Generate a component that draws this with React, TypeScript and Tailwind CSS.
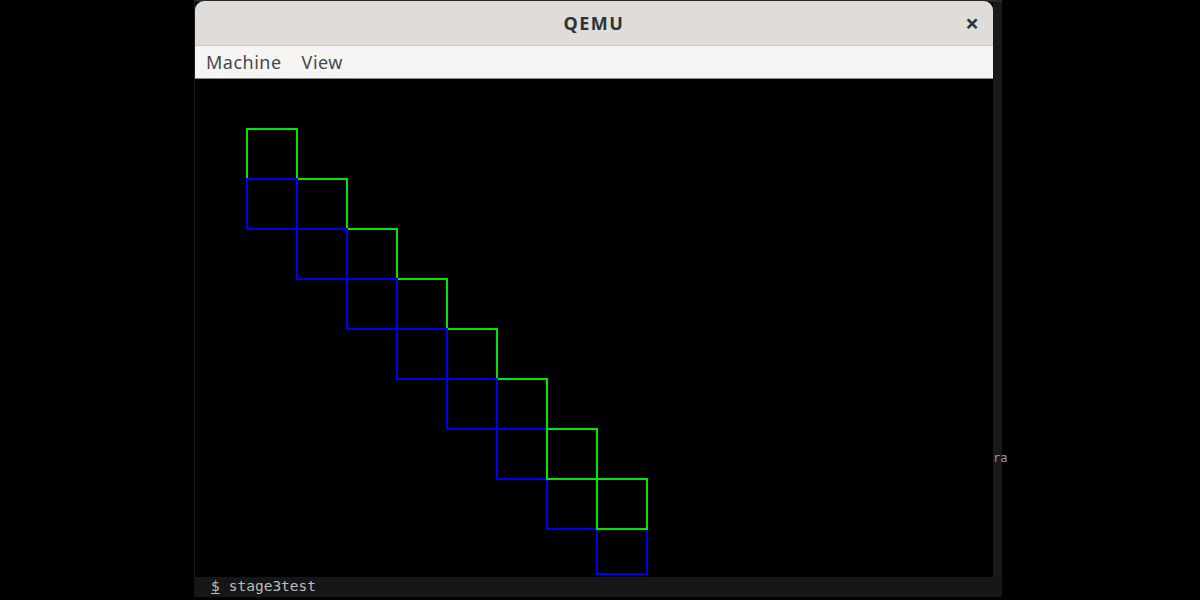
import React from "react";

const N = 8;

function Squares() {
  const greens = Array.from({ length: N }, (_, i) => ({ x: 52 + 50 * i, y: 50 + 50 * i }));
  const blues = Array.from({ length: N }, (_, i) => ({ x: 52 + 50 * i, y: 100 + 50 * i }));
  const G = "#00e600";
  const B = "#0000f0";
  return (
    <svg width="798" height="497" className="block" shapeRendering="crispEdges">
      {greens.slice(0, 6).map((s, i) => (
        <rect key={"g" + i} x={s.x} y={s.y} width={50} height={50} fill="none" stroke={G} strokeWidth={2} />
      ))}
      {blues.slice(0, 6).map((s, i) => (
        <rect key={"b" + i} x={s.x} y={s.y} width={50} height={50} fill="none" stroke={B} strokeWidth={2} />
      ))}
      {blues.slice(6).map((s, i) => (
        <rect key={"b2" + i} x={s.x} y={s.y} width={50} height={i === 1 ? 45 : 50} fill="none" stroke={B} strokeWidth={2} />
      ))}
      {greens.slice(6).map((s, i) => (
        <rect key={"g2" + i} x={s.x} y={s.y} width={50} height={50} fill="none" stroke={G} strokeWidth={2} />
      ))}
    </svg>
  );
}

export default function App() {
  return (
    <div className="relative w-[1200px] h-[600px] bg-black overflow-hidden" style={{ fontFamily: '"Noto Sans", "Open Sans", sans-serif' }}>
      {/* terminal behind */}
      <div className="absolute left-[194px] top-0 w-[808px] h-[597px] bg-[#151515] flex flex-col">
        <div className="h-[2px] bg-[#2a2a2a]" />
        <div className="flex-1 flex">
          <div className="w-[1px] bg-[#1c1c1c]" />
          <div className="flex-1 bg-black" />
          <div className="w-[9px] bg-[#191919] relative">
            <span className="absolute left-0 top-[450px] text-[12px] leading-none text-[#9a9a9a]" style={{ fontFamily: '"DejaVu Sans Mono", monospace' }}>ra</span>
          </div>
        </div>
        <div className="h-[20px] bg-[#161616] flex items-center pl-[17px] text-[14.5px] text-[#bdbdbd]" style={{ fontFamily: '"DejaVu Sans Mono", monospace' }}>
          <span className="underline underline-offset-2">$</span>
          <span className="ml-[9px]">stage3test</span>
        </div>
      </div>

      {/* QEMU window */}
      <div className="absolute left-[195px] top-[1px] w-[798px] h-[576px] flex flex-col">
        <div className="h-[45px] bg-[#dfdcd9] rounded-t-[9px] border-b border-[#cbc6c1] relative flex items-center justify-center">
          <span className="text-[18px] font-bold text-[#2e3436] tracking-[1.5px] leading-none">QEMU</span>
          <span className="absolute right-[14px] top-[10px] text-[24px] font-bold text-[#2e3436] leading-none">×</span>
        </div>
        <div className="h-[33px] bg-[#f6f5f4] border-b border-[#8a8a8a] flex items-center pl-[11px] gap-[20px] text-[18px] tracking-[0.5px] text-[#45494b]">
          <span>Machine</span>
          <span>View</span>
        </div>
        <div className="flex-1 bg-black">
          <Squares />
        </div>
      </div>
    </div>
  );
}
